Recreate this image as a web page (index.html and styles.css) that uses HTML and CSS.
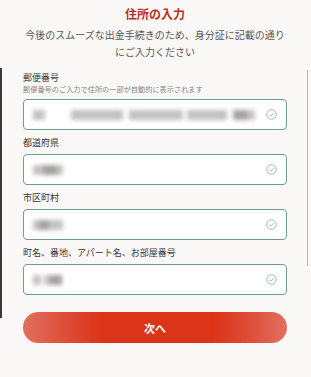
FILE: index.html
```html
<!DOCTYPE html>
<html lang="ja">
<head>
<meta charset="utf-8">
<link rel="stylesheet" href="styles.css">
</head>
<body>
<div class="page">
  <h1 class="title">住所の入力</h1>
  <p class="lead">今後のスムーズな出金手続きのため、身分証に記載の通り<br>にご入力ください</p>

  <div class="field first">
    <div class="label">郵便番号</div>
    <div class="hint">郵便番号のご入力で住所の一部が自動的に表示されます</div>
    <div class="box">
      <div class="blur">
        <span class="b" style="width:12px"></span>
        <span class="b" style="width:52px;margin-left:26px"></span>
        <span class="b" style="width:54px;margin-left:6px"></span>
        <span class="b" style="width:40px;margin-left:4px"></span>
        <span class="b dark" style="width:14px;margin-left:6px"></span>
        <span class="b" style="width:8px"></span>
      </div>
      <svg class="check" viewBox="0 0 12 12"><circle cx="6" cy="6" r="5.2"/><path d="M3.6 6.2 L5.3 7.8 L8.4 4.4"/></svg>
    </div>
  </div>

  <div class="field">
    <div class="label">都道府県</div>
    <div class="box">
      <div class="blur"><span class="b" style="width:10px"></span><span class="b dark" style="width:14px"></span><span class="b" style="width:6px"></span></div>
      <svg class="check" viewBox="0 0 12 12"><circle cx="6" cy="6" r="5.2"/><path d="M3.6 6.2 L5.3 7.8 L8.4 4.4"/></svg>
    </div>
  </div>

  <div class="field">
    <div class="label">市区町村</div>
    <div class="box">
      <div class="blur"><span class="b" style="width:6px"></span><span class="b dark" style="width:10px"></span><span class="b" style="width:14px"></span></div>
      <svg class="check" viewBox="0 0 12 12"><circle cx="6" cy="6" r="5.2"/><path d="M3.6 6.2 L5.3 7.8 L8.4 4.4"/></svg>
    </div>
  </div>

  <div class="field">
    <div class="label">町名、番地、アパート名、お部屋番号</div>
    <div class="box">
      <div class="blur"><span class="b" style="width:8px"></span><span class="b" style="width:6px;margin-left:3px"></span><span class="b dark" style="width:12px"></span></div>
      <svg class="check" viewBox="0 0 12 12"><circle cx="6" cy="6" r="5.2"/><path d="M3.6 6.2 L5.3 7.8 L8.4 4.4"/></svg>
    </div>
  </div>

  <button class="next">次へ</button>

  <div class="edge-left"></div>
  <div class="edge-right"></div>
</div>
</body>
</html>
```

FILE: styles.css
```css
html, body {
  margin: 0;
  padding: 0;
  background: #faf8f6;
}
body {
  font-family: "Noto Sans CJK JP", "Noto Sans", sans-serif;
  color: #333;
}
.page {
  position: relative;
  width: 311px;
  height: 377px;
  box-sizing: border-box;
  padding: 4px 24px 0 23px;
  display: flex;
  flex-direction: column;
  overflow: hidden;
}
.title {
  margin: 0;
  text-align: center;
  font-size: 12px;
  line-height: 20px;
  font-weight: 700;
  color: #b8301f;
}
.lead {
  margin: 1.5px -20px 0;
  text-align: center;
  font-size: 10px;
  line-height: 17px;
  color: #5a5552;
  white-space: nowrap;
}
.field {
  display: flex;
  flex-direction: column;
  margin-top: 6px;
}
.field.first {
  margin-top: 11px;
}
.label {
  font-size: 9px;
  line-height: 13px;
  color: #3a3735;
  margin-bottom: 5px;
}
.first .label {
  margin-bottom: 0.5px;
}
.hint {
  font-size: 7.2px;
  line-height: 10px;
  color: #8a8582;
  margin-bottom: 5px;
  white-space: nowrap;
}
.box {
  height: 29px;
  border: 1px solid #6f9e8d;
  border-radius: 4px;
  background: #fff;
  display: flex;
  align-items: center;
  padding: 0 9px 0 9px;
}
.blur {
  flex: 1;
  display: flex;
  align-items: center;
  filter: blur(2px);
}
.blur .b {
  display: block;
  height: 10px;
  background: #c4c2c1;
}
.blur .b.dark {
  background: #a4a1a0;
}
.check {
  width: 11px;
  height: 11px;
  fill: none;
  stroke: #8aa89c;
  stroke-width: 0.9;
}
.next {
  margin-top: 17px;
  height: 31px;
  border: none;
  border-radius: 16px;
  background: linear-gradient(90deg, #e07060 0%, #dd4a34 18%, #dc3418 30%, #dc3418 72%, #dd4a34 84%, #e07060 100%);
  color: #fff;
  font-family: "Noto Sans CJK JP", sans-serif;
  font-size: 11px;
  font-weight: 700;
  padding: 0;
}
.edge-left {
  position: absolute;
  left: 0;
  top: 68px;
  width: 1.5px;
  height: 250px;
  background: #3a3a3a;
}
.edge-right {
  position: absolute;
  left: 307px;
  top: 70px;
  width: 1px;
  height: 196px;
  background: #b8b6b4;
}
```
